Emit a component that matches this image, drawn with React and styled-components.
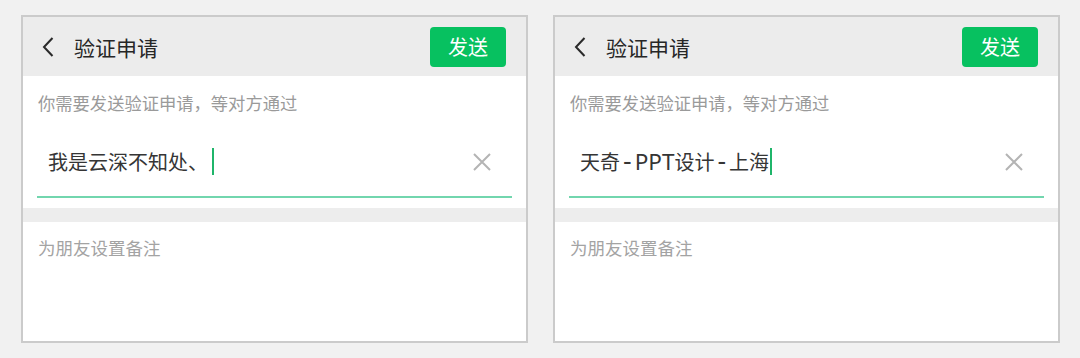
import React from "react";
import styled, { createGlobalStyle } from "styled-components";

const Global = createGlobalStyle`
  html, body { margin: 0; padding: 0; background: #f1f1f1; }
  body { font-family: "Noto Sans CJK SC", "Noto Sans", sans-serif; }
`;

const Page = styled.div`
  display: flex;
  gap: 25px;
  padding: 15px 0 0 21px;
`;

const Card = styled.div`
  width: 507px;
  height: 328px;
  box-sizing: border-box;
  border: 2px solid #cbcbcb;
  background: #fff;
  display: flex;
  flex-direction: column;
`;

const Header = styled.div`
  height: 59px;
  background: #ececec;
  display: flex;
  align-items: center;
  padding: 0 20px 0 19px;
`;

const Back = styled.svg`
  width: 12px;
  height: 20px;
  flex: none;
  margin-top: 1px;
`;

const Title = styled.div`
  margin-left: 20px;
  font-size: 21px;
  color: #262626;
  flex: 1;
  line-height: 28px;
`;

const SendButton = styled.div`
  width: 76px;
  height: 40px;
  border-radius: 4px;
  background: #07c160;
  color: #fff;
  font-size: 20px;
  display: flex;
  align-items: center;
  justify-content: center;
`;

const Section = styled.div`
  padding: 0 14px;
`;

const Hint = styled.div`
  font-size: 17.3px;
  line-height: 24px;
  color: #9a9a9a;
  padding-top: 15px;
  padding-left: 1px;
  white-space: nowrap;
`;

const InputRow = styled.div`
  display: flex;
  align-items: center;
  padding: 33px 21px 20px 11px;
  border-bottom: 2px solid #72d6ae;
`;

const InputText = styled.div`
  font-size: 20px;
  line-height: 28px;
  height: 28px;
  color: #353535;
  flex: 1;
  white-space: pre;
`;

const Latin = styled.span`
  font-family: "Noto Sans", sans-serif;
  font-size: 22.5px;
  line-height: 0;
`;

const Dash = styled.span`
  font-family: "Liberation Sans", sans-serif;
  font-size: 26px;
  line-height: 0;
  padding: 0 3px;
`;

const Caret = styled.span`
  display: inline-block;
  width: 2px;
  height: 27px;
  background: #1fb56a;
  vertical-align: -5px;
  margin-left: ${(p) => p.$gap}px;
`;

const Clear = styled.svg`
  width: 18px;
  height: 18px;
  flex: none;
`;

const Band = styled.div`
  height: 14px;
  background: #ededed;
  margin-top: 10px;
`;

const Remark = styled.div`
  font-size: 17.5px;
  line-height: 24px;
  color: #a3a3a3;
  padding: 14px 15px 0;
`;

function Panel({ children, gap }) {
  return (
    <Card>
      <Header>
        <Back viewBox="0 0 12 20">
          <path d="M10.5 1 L2 10 L10.5 19" fill="none" stroke="#2a2a2a" strokeWidth="2" />
        </Back>
        <Title>验证申请</Title>
        <SendButton>发送</SendButton>
      </Header>
      <Section>
        <Hint>你需要发送验证申请，等对方通过</Hint>
        <InputRow>
          <InputText>
            {children}
            <Caret $gap={gap} />
          </InputText>
          <Clear viewBox="0 0 18 18">
            <path d="M1 1 L17 17 M17 1 L1 17" stroke="#b4b4b4" strokeWidth="2" fill="none" />
          </Clear>
        </InputRow>
      </Section>
      <Band />
      <Remark>为朋友设置备注</Remark>
    </Card>
  );
}

export default function App() {
  return (
    <>
      <Global />
      <Page>
        <Panel gap={4}>我是云深不知处、</Panel>
        <Panel gap={1}>
          天奇<Dash>-</Dash><Latin>PPT</Latin>设计<Dash>-</Dash>上海
        </Panel>
      </Page>
    </>
  );
}
